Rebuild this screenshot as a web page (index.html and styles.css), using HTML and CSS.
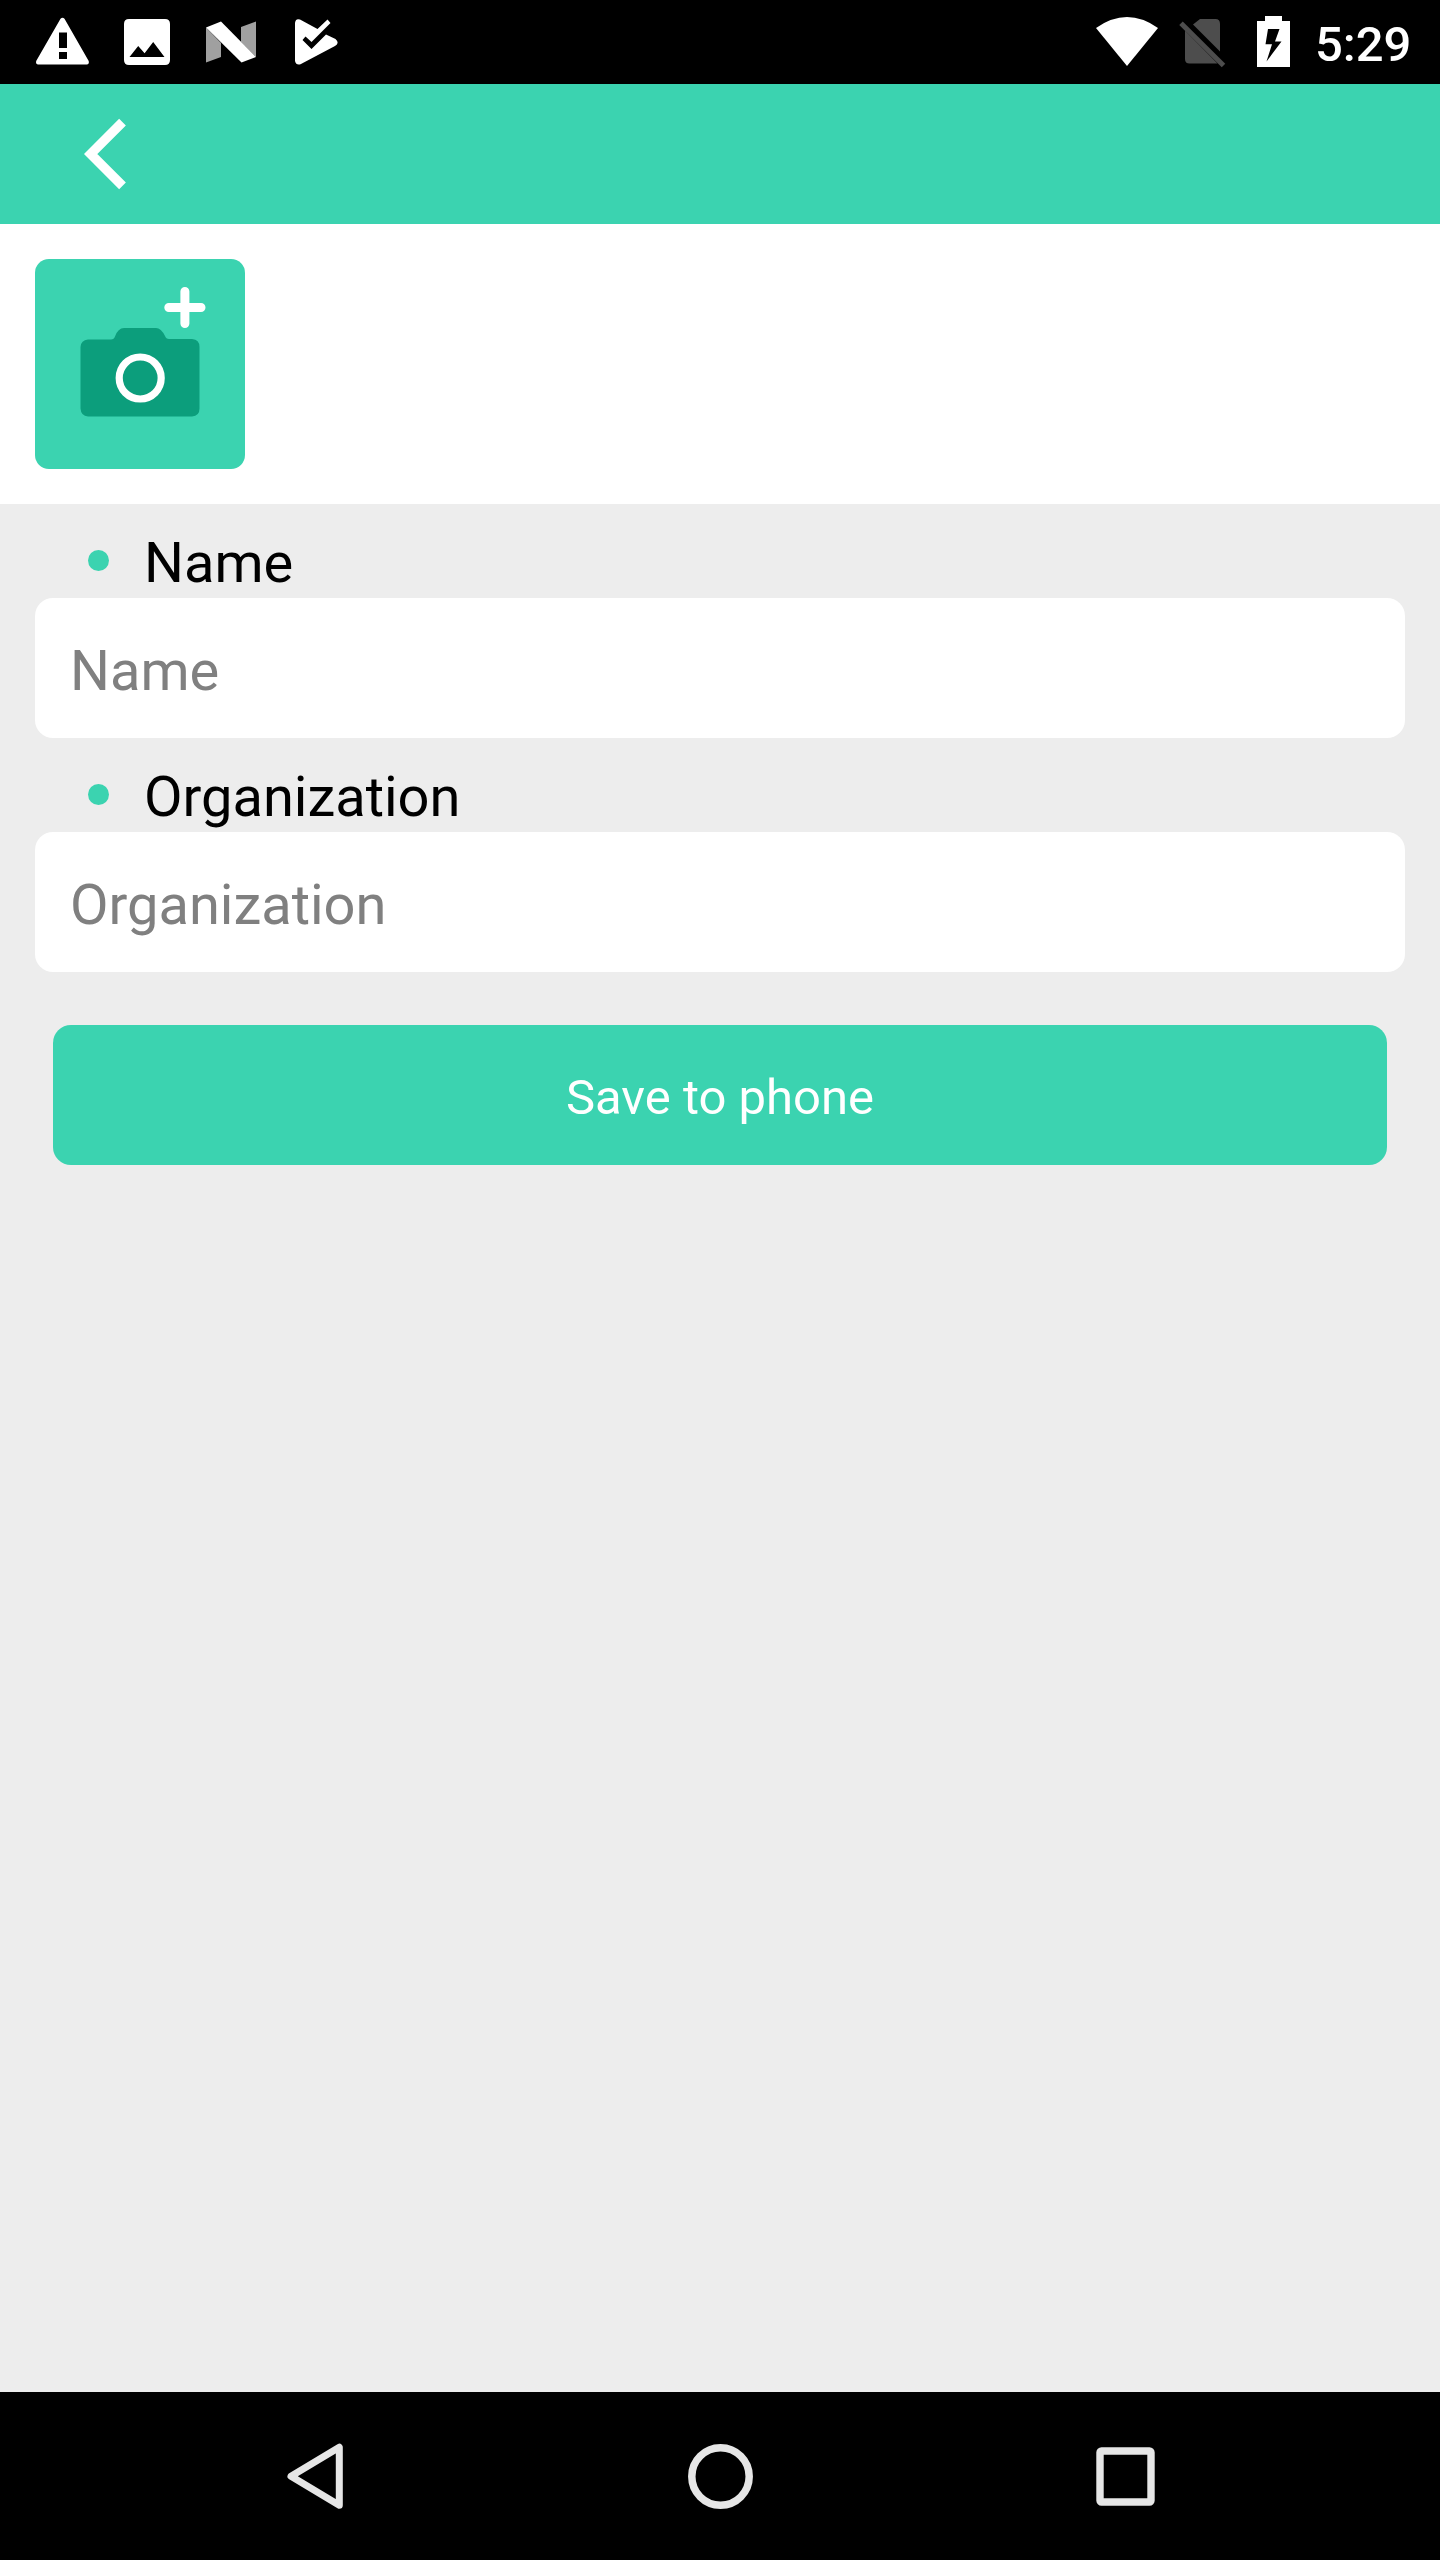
FILE: index.html
```html
<!DOCTYPE html>
<html lang="en">
<head>
<meta charset="utf-8">
<title>New contact</title>
<link rel="stylesheet" href="styles.css">
</head>
<body>
<div class="screen">
  <header class="status">
    <svg class="status-icons" width="360" height="84" viewBox="0 0 360 84" aria-hidden="true">
      <path fill="#fff" fill-rule="evenodd" d="M60.500 18.800q2-2.200 4 0L88.700 61q.8 3.300-2 3.600H38.200q-2.800-.3-2-3.600ZM59 32.500V48h8V32.500ZM59 52v7h8v-7Z"/>
      <path fill="#fff" fill-rule="evenodd" d="M129 19h36q5 0 5 5v36q0 5-5 5h-36q-5 0-5-5V24q0-5 5-5ZM129.500 57H164.500L153.200 42 144.600 53.200 138.200 46Z"/>
      <path fill="#a0a0a0" d="M206 27.500 221 43v14L206 62.500ZM241 27 256 21.500V57L241 42Z"/>
      <path fill="#fff" d="M206 27.500 221 21.500 256 57 241.500 62.500Z"/>
      <path fill="#fff" d="M295 23q.5-5 5-3.500L317.500 29 327.500 19.500 330.500 23 311.500 42 305.500 36.500 302.500 40 311.500 49 326 34.500 335.500 39Q340 43 335 46L300.500 64.300Q296 65.500 295 61Z"/>
    </svg>
    <div class="status-right">
      <svg width="210" height="84" viewBox="1090 0 210 84" aria-hidden="true">
        <path fill="#fff" d="M1096 28Q1127 6 1158 28L1127 66Z"/>
        <path fill="#4d4d4d" d="M1200 19H1215.500Q1220 19 1220 24V51.500L1193 24.500ZM1185 30.500 1217.500 63.500H1189.500Q1185 63.500 1185 59Z"/>
        <path stroke="#4d4d4d" stroke-width="5" d="M1181 23.300 1223.500 65.500"/>
        <path fill="#fff" fill-rule="evenodd" d="M1265 16H1282V21H1290V67H1257V21H1265ZM1268 29 1265.500 44.300H1272L1266.500 61.500 1281.500 41.500H1275L1279.500 29Z"/>
      </svg>
      <span class="clock">5:29</span>
    </div>
  </header>
  <nav class="topbar">
    <svg width="44" height="72" viewBox="0 0 44 72" aria-label="Back"><path fill="none" stroke="#fff" stroke-width="9.500" d="M38.500 4.200 6.700 36 38.500 67.800"/></svg>
  </nav>
  <section class="photos">
    <div class="tile">
      <svg width="210" height="210" viewBox="0 0 210 210" aria-label="Add photo">
        <path fill="#0c9e7c" d="M53 80.500H76Q79 80.500 80 77.500 83 69 89 69H121Q126 69 130 77Q131 80 134 80H157Q164.500 80.500 164.500 88V149.500Q164.500 157 157 157.500H53Q46 157 45.500 149.500V88Q46 81 53 80.500Z"/>
        <circle cx="105.200" cy="119" r="21" fill="none" stroke="#fff" stroke-width="7.200"/>
        <path stroke="#fff" stroke-width="9" stroke-linecap="round" d="M149.900 32.500V64.500M133.800 48.500H166"/>
      </svg>
    </div>
  </section>
  <main class="form">
    <label class="label" for="name"><i class="dot"></i><span>Name</span></label>
    <input class="field" id="name" placeholder="Name">
    <label class="label" for="org"><i class="dot"></i><span>Organization</span></label>
    <input class="field" id="org" placeholder="Organization">
    <button class="save">Save to phone</button>
  </main>
  <footer class="navbar">
    <svg width="58" height="68" viewBox="0 0 58 68"><path fill="none" stroke="#e6e6e6" stroke-width="7" stroke-linejoin="round" d="M53.300 5.200V63.200L5 34.200Z"/></svg>
    <svg width="66" height="66" viewBox="0 0 66 66"><circle cx="33.500" cy="33.500" r="28.700" fill="none" stroke="#e6e6e6" stroke-width="7.500"/></svg>
    <svg width="60" height="60" viewBox="0 0 60 60"><rect x="5" y="5" width="51" height="51" rx="1.500" fill="none" stroke="#e6e6e6" stroke-width="7.400"/></svg>
  </footer>
</div>
</body>
</html>
```
FILE: styles.css
```css
* {
  box-sizing: border-box;
}

body {
  margin: 0;
  font-family: Roboto, sans-serif;
}

svg {
  display: block;
}

.screen {
  display: flex;
  flex-direction: column;
  width: 1440px;
  height: 2560px;
  background: #ededed;
}

.status {
  display: flex;
  justify-content: space-between;
  height: 84px;
  background: #000;
}

.status-right {
  display: flex;
  padding-right: 28px;
}

.clock {
  width: 112px;
  padding-left: 15px;
  color: #fff;
  font-size: 49px;
  font-weight: 500;
  line-height: 89px;
  white-space: nowrap;
}

.topbar {
  display: flex;
  align-items: center;
  height: 140px;
  padding-left: 84px;
  background: #3bd3b0;
}

.photos {
  height: 280px;
  padding: 35px;
  background: #fff;
}

.tile {
  width: 210px;
  height: 210px;
  border-radius: 14px;
  background: #3bd3b0;
}

.form {
  display: flex;
  flex: 1;
  flex-direction: column;
  padding: 0 35px;
}

.label {
  display: flex;
  align-items: center;
  gap: 35px;
  height: 94px;
  padding: 26px 0 2px 53px;
  color: #000;
  font-size: 56px;
  line-height: 66px;
}

.dot {
  width: 21px;
  height: 21px;
  margin-top: -5px;
  border-radius: 50%;
  background: #3bd3b0;
}

.field {
  height: 140px;
  padding: 6px 35px 0;
  border: 0;
  border-radius: 18px;
  background: #fff;
  font-family: inherit;
  font-size: 56px;
}

.field::placeholder {
  color: #808080;
  opacity: 1;
}

.save {
  height: 140px;
  margin: 53px 18px 0;
  padding: 5px 0 0;
  border: 0;
  border-radius: 18px;
  background: #3bd3b0;
  color: #fff;
  font-family: inherit;
  font-size: 49px;
}

.navbar {
  display: grid;
  grid-template-columns: 405px 405px 405px;
  align-items: center;
  justify-content: center;
  justify-items: center;
  height: 168px;
  background: #000;
}
```
